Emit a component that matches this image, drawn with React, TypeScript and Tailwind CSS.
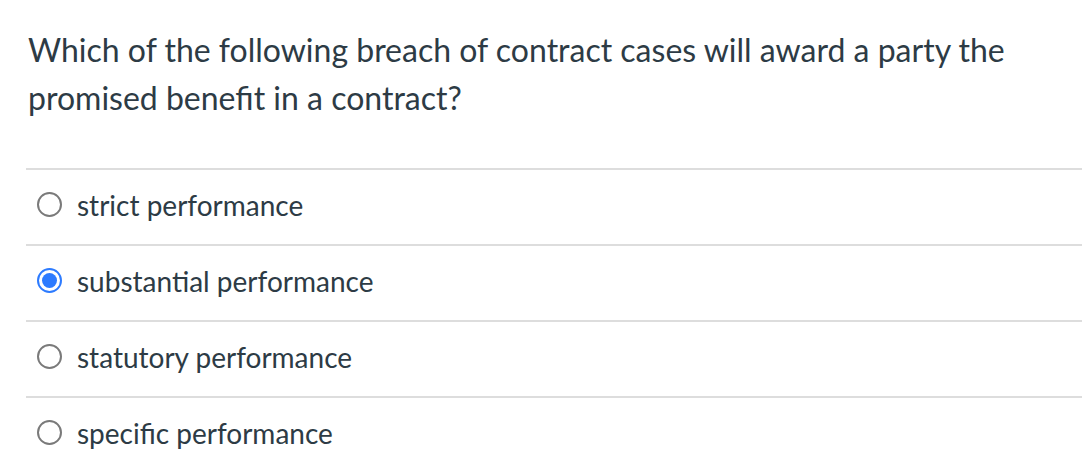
import React from "react";

const options = [
  { label: "strict performance", checked: false },
  { label: "substantial performance", checked: true },
  { label: "statutory performance", checked: false },
  { label: "specific performance", checked: false },
];

function Radio({ checked }: { checked: boolean }) {
  if (checked) {
    return (
      <span className="flex h-[25px] w-[25px] shrink-0 items-center justify-center rounded-full border-2 border-[#2d7bff] bg-white">
        <span className="h-[15px] w-[15px] rounded-full bg-[#2d7bff]" />
      </span>
    );
  }
  return (
    <span className="h-[25px] w-[25px] shrink-0 rounded-full border-2 border-[#7a7a7a] bg-white" />
  );
}

export default function App() {
  return (
    <div
      className="w-[1092px] h-[476px] overflow-hidden bg-white pl-[26px] pr-[10px] text-[#2d3b45]"
      style={{ fontFamily: "Lato, 'Noto Sans', sans-serif" }}
    >
      <div className="pt-[26px] pl-[2px] text-[32px] leading-[48px]">
        Which of the following breach of contract cases will award a party the
        <br />
        promised benefit in a contract?
      </div>
      <div className="mt-[46px]">
        {options.map((o) => (
          <div
            key={o.label}
            className="flex h-[76px] items-center gap-[15px] border-t-2 border-[#dddddd] pb-[5px] pl-[11px]"
          >
            <Radio checked={o.checked} />
            <span className="text-[28px] leading-none">{o.label}</span>
          </div>
        ))}
      </div>
    </div>
  );
}
